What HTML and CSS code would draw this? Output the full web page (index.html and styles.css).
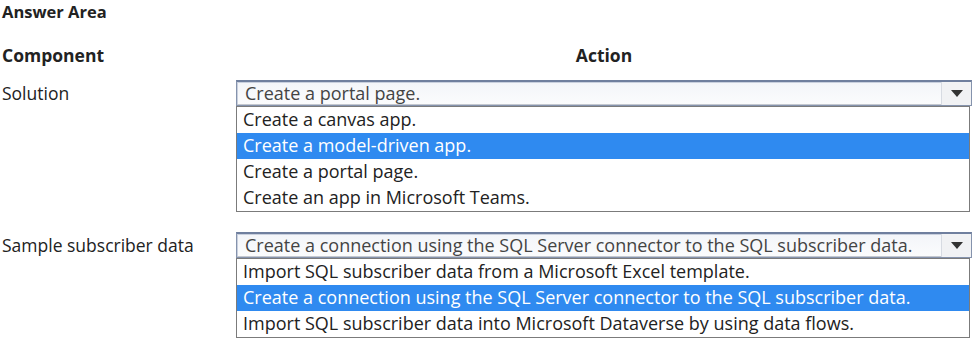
FILE: index.html
```html
<!DOCTYPE html>
<html lang="en">
<head>
    <meta charset="UTF-8">
    <title>Answer Area</title>
    <link rel="stylesheet" href="styles.css">
</head>
<body>
    <div class="answer-area">
        <h2 class="title">Answer Area</h2>
        <div class="head-row">
            <div class="label-col">Component</div>
            <div class="action-col">Action</div>
        </div>

        <div class="row">
            <div class="label-col">Solution</div>
            <div class="dropdown">
                <div class="select">
                    <span class="select-text">Create a portal page.</span>
                    <span class="select-btn"><span class="arrow"></span></span>
                </div>
                <ul class="options">
                    <li>Create a canvas app.</li>
                    <li class="selected">Create a model-driven app.</li>
                    <li>Create a portal page.</li>
                    <li>Create an app in Microsoft Teams.</li>
                </ul>
            </div>
        </div>

        <div class="row">
            <div class="label-col">Sample subscriber data</div>
            <div class="dropdown">
                <div class="select">
                    <span class="select-text">Create a connection using the SQL Server connector to the SQL subscriber data.</span>
                    <span class="select-btn"><span class="arrow"></span></span>
                </div>
                <ul class="options">
                    <li>Import SQL subscriber data from a Microsoft Excel template.</li>
                    <li class="selected">Create a connection using the SQL Server connector to the SQL subscriber data.</li>
                    <li>Import SQL subscriber data into Microsoft Dataverse by using data flows.</li>
                </ul>
            </div>
        </div>
    </div>
</body>
</html>
```

FILE: styles.css
```css
* {
    margin: 0;
    padding: 0;
    box-sizing: border-box;
}
body {
    background: #fff;
    color: #222;
    font-family: 'Open Sans', sans-serif;
    font-size: 17.5px;
}
.answer-area {
    padding: 0 2px 0 2px;
}
.title {
    font-size: 16.5px;
    font-weight: 700;
    line-height: 20px;
    padding-top: 2px;
}
.head-row {
    display: flex;
    margin-top: 23px;
    line-height: 20px;
    font-weight: 700;
}
.label-col {
    width: 234px;
    flex-shrink: 0;
}
.action-col {
    flex: 1;
    text-align: center;
}
.row {
    display: flex;
    margin-top: 15px;
}
.row + .row {
    margin-top: 20px;
}
.row .label-col {
    line-height: 26px;
}
.dropdown {
    flex: 1;
    font-size: 18px;
}
.select {
    display: flex;
    height: 26px;
    border: 1px solid #8593ad;
    border-top: 2px solid #6f7f9e;
    background: linear-gradient(#f3f5f9, #fbfcfd);
    box-shadow: inset 1px 1px 0 #c9d0de;
}
.select-text {
    flex: 1;
    padding-left: 8px;
    line-height: 22px;
    color: #444;
    border-bottom: 1px solid #c4c8cf;
    white-space: nowrap;
    overflow: hidden;
}
.select-btn {
    width: 30px;
    border-left: 1px solid #d7dbe2;
    display: flex;
    align-items: center;
    justify-content: center;
    background: #f1f2f4;
}
.arrow {
    width: 0;
    height: 0;
    border-left: 6px solid transparent;
    border-right: 6px solid transparent;
    border-top: 7px solid #333;
}
.options {
    list-style: none;
    border: 1px solid #7b7b7b;
    margin-right: 2px;
}
.options li {
    height: 26px;
    line-height: 25px;
    padding-left: 6px;
    white-space: nowrap;
}
.options li.selected {
    background: #2f8af0;
    color: #fff;
}
```
